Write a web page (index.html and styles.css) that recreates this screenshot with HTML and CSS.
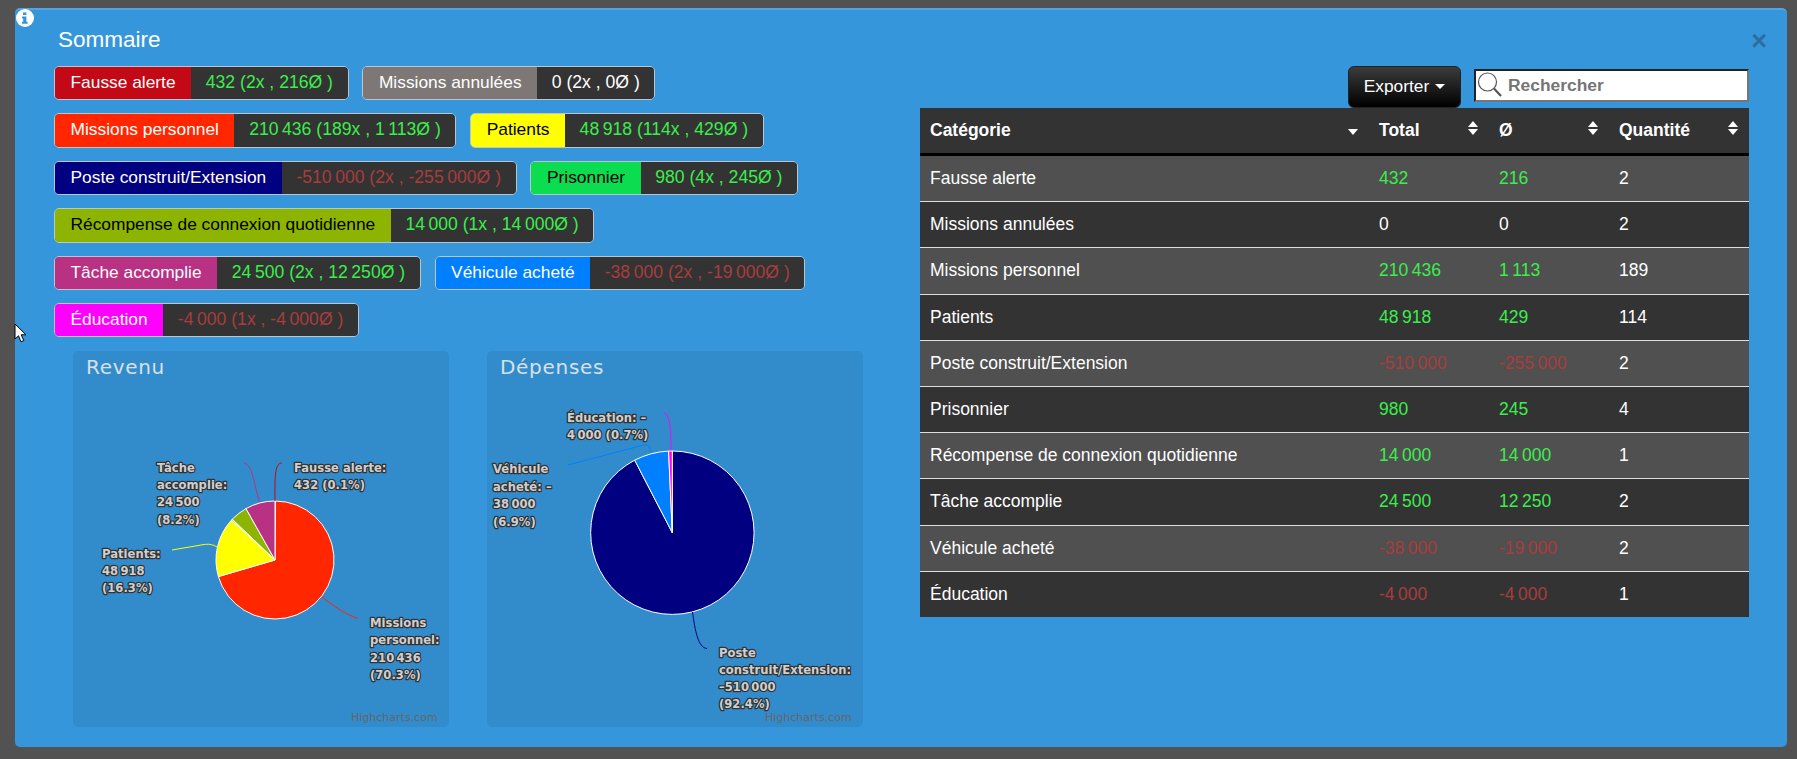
FILE: index.html
```html
<!DOCTYPE html>
<html lang="fr">
<head>
<meta charset="utf-8">
<title>Sommaire</title>
<link rel="stylesheet" href="styles.css">
</head>
<body>
<svg class="cursor" width="14" height="21" viewBox="0 0 14 21"><path d="M1 1 L1 16 L4.5 12.8 L7 18.8 L9.8 17.6 L7.2 11.8 L12 11.8 Z" fill="#fff" stroke="#000" stroke-width="1"/></svg>
<main class="modal">
  <svg class="info" width="20" height="20" viewBox="0 0 20 20"><circle cx="10" cy="10" r="9" fill="#fff"/><path d="M8 4.5h3.4v2.6H8zM7 8.4h4.4v5.3h1.2v2H7v-2h1.2v-3.3H7z" fill="#3596dc"/></svg>
  <button class="close" type="button">×</button>
  <h1 class="title">Sommaire</h1>
  <div class="columns">
    <section class="left">
      <div class="badges">
        <div class="badge"><span class="name c-fausse">Fausse alerte</span><span class="val pos">432 (2x , 216Ø )</span></div>
        <div class="badge"><span class="name c-annul">Missions annulées</span><span class="val zero">0 (2x , 0Ø )</span></div>
        <div class="badge"><span class="name c-perso">Missions personnel</span><span class="val pos">210&thinsp;436 (189x , 1&thinsp;113Ø )</span></div>
        <div class="badge"><span class="name c-pat">Patients</span><span class="val pos">48&thinsp;918 (114x , 429Ø )</span></div>
        <div class="badge"><span class="name c-poste">Poste construit/Extension</span><span class="val neg">-510&thinsp;000 (2x , -255&thinsp;000Ø )</span></div>
        <div class="badge"><span class="name c-pris">Prisonnier</span><span class="val pos">980 (4x , 245Ø )</span></div>
        <div class="badge"><span class="name c-rec">Récompense de connexion quotidienne</span><span class="val pos">14&thinsp;000 (1x , 14&thinsp;000Ø )</span></div>
        <div class="badge"><span class="name c-tache">Tâche accomplie</span><span class="val pos">24&thinsp;500 (2x , 12&thinsp;250Ø )</span></div>
        <div class="badge"><span class="name c-veh">Véhicule acheté</span><span class="val neg">-38&thinsp;000 (2x , -19&thinsp;000Ø )</span></div>
        <div class="badge"><span class="name c-edu">Éducation</span><span class="val neg">-4&thinsp;000 (1x , -4&thinsp;000Ø )</span></div>
      </div>
      <div class="charts">
        <svg class="chart" width="376" height="376" viewBox="73 351 376 376">
          <text class="chart-title" x="86" y="374">Revenu</text>
          <g class="wedges">
            <path fill="#c30816" d="M275 560L275 501A59 59 0 0 1 275.5 501Z"/>
            <path fill="#ff2600" d="M275 560L275.5 501A59 59 0 1 1 218.4 576.6Z"/>
            <path fill="#ffff00" d="M275 560L218.4 576.6A59 59 0 0 1 231.5 520.1Z"/>
            <path fill="#0cdc50" d="M275 560L231.5 520.1A59 59 0 0 1 232.3 519.2Z"/>
            <path fill="#8cb400" d="M275 560L232.3 519.2A59 59 0 0 1 246 508.6Z"/>
            <path fill="#b93182" d="M275 560L246 508.6A59 59 0 0 1 275 501Z"/>
          </g>
          <g class="leaders">
            <path stroke="#c30816" d="M275 501C275 480 274 463 282 463"/>
            <path stroke="#b93182" d="M259.500 502C254 485 253 465 244 463"/>
            <path stroke="#ffff00" d="M217 547C212 544 208 544 204 544.500L172 550"/>
            <path stroke="#ff2600" d="M322 597C335 607 345 614 358 618.500"/>
          </g>
          <g class="labels">
            <text x="294" y="472">Fausse alerte:</text>
            <text x="294" y="489">432 (0.1%)</text>
            <text x="157" y="472">Tâche</text>
            <text x="157" y="489">accomplie:</text>
            <text x="157" y="506">24&thinsp;500</text>
            <text x="157" y="523.500">(8.2%)</text>
            <text x="102" y="557.500">Patients:</text>
            <text x="102" y="575">48&thinsp;918</text>
            <text x="102" y="592">(16.3%)</text>
            <text x="370" y="627">Missions</text>
            <text x="370" y="644">personnel:</text>
            <text x="370" y="661.500">210&thinsp;436</text>
            <text x="370" y="678.500">(70.3%)</text>
          </g>
          <text class="credit" x="351" y="721">Highcharts.com</text>
        </svg>
        <svg class="chart" width="376" height="376" viewBox="487 351 376 376">
          <text class="chart-title" x="500" y="374">Dépenses</text>
          <g class="wedges">
            <path fill="#000080" d="M672.300 532.700L672.300 451A81.700 81.700 0 1 1 634.700 460.200Z"/>
            <path fill="#0080ff" d="M672.300 532.700L634.700 460.200A81.700 81.700 0 0 1 668.600 451.100Z"/>
            <path fill="#ff00ff" d="M672.300 532.700L668.600 451.100A81.700 81.700 0 0 1 672.300 451Z"/>
          </g>
          <g class="leaders">
            <path stroke="#ff00ff" d="M671 450C671 430 670 413 663.500 413"/>
            <path stroke="#0080ff" d="M651 453C650 444 647 444 640 446L568 465"/>
            <path stroke="#000080" d="M692.500 612C695 630 698 648 707 648.500"/>
          </g>
          <g class="labels">
            <text x="567" y="421.500">Éducation: –</text>
            <text x="567" y="438.500">4&thinsp;000 (0.7%)</text>
            <text x="493" y="473">Véhicule</text>
            <text x="493" y="490.500">acheté: –</text>
            <text x="493" y="507.500">38&thinsp;000</text>
            <text x="493" y="525.500">(6.9%)</text>
            <text x="719" y="656.500">Poste</text>
            <text x="719" y="673.500">construit/Extension:</text>
            <text x="719" y="691">–510&thinsp;000</text>
            <text x="719" y="708">(92.4%)</text>
          </g>
          <text class="credit" x="765" y="721">Highcharts.com</text>
        </svg>
      </div>
    </section>
    <section class="right">
      <div class="toolbar">
        <button class="export" type="button">Exporter<span class="caret"></span></button>
        <div class="search">
          <svg class="lens" width="26" height="26" viewBox="0 0 26 26"><circle cx="10.500" cy="10" r="9" fill="none" stroke="#555" stroke-width="1.200"/><path d="M17 16.500L24 24" stroke="#555" stroke-width="2.200"/></svg>
          <input class="search-input" type="text" placeholder="Rechercher">
        </div>
      </div>
      <table class="data">
        <colgroup><col class="col-cat"><col class="col-num"><col class="col-num"><col class="col-qty"></colgroup>
        <thead>
          <tr>
            <th><div class="th-in">Catégorie<span class="sort"><i class="down"></i></span></div></th>
            <th><div class="th-in">Total<span class="sort"><i class="up"></i><i class="down"></i></span></div></th>
            <th><div class="th-in">Ø<span class="sort"><i class="up"></i><i class="down"></i></span></div></th>
            <th><div class="th-in">Quantité<span class="sort"><i class="up"></i><i class="down"></i></span></div></th>
          </tr>
        </thead>
        <tbody>
          <tr><td>Fausse alerte</td><td class="pos">432</td><td class="pos">216</td><td>2</td></tr>
          <tr><td>Missions annulées</td><td>0</td><td>0</td><td>2</td></tr>
          <tr><td>Missions personnel</td><td class="pos">210&thinsp;436</td><td class="pos">1&thinsp;113</td><td>189</td></tr>
          <tr><td>Patients</td><td class="pos">48&thinsp;918</td><td class="pos">429</td><td>114</td></tr>
          <tr><td>Poste construit/Extension</td><td class="neg">-510&thinsp;000</td><td class="neg">-255&thinsp;000</td><td>2</td></tr>
          <tr><td>Prisonnier</td><td class="pos">980</td><td class="pos">245</td><td>4</td></tr>
          <tr><td>Récompense de connexion quotidienne</td><td class="pos">14&thinsp;000</td><td class="pos">14&thinsp;000</td><td>1</td></tr>
          <tr><td>Tâche accomplie</td><td class="pos">24&thinsp;500</td><td class="pos">12&thinsp;250</td><td>2</td></tr>
          <tr><td>Véhicule acheté</td><td class="neg">-38&thinsp;000</td><td class="neg">-19&thinsp;000</td><td>2</td></tr>
          <tr><td>Éducation</td><td class="neg">-4&thinsp;000</td><td class="neg">-4&thinsp;000</td><td>1</td></tr>
        </tbody>
      </table>
    </section>
  </div>
</main>
</body>
</html>
```
FILE: styles.css
```css
* { box-sizing: border-box; }
html, body { margin: 0; height: 100%; overflow: hidden; }
body {
  background: #525252;
  font-family: "Liberation Sans", Arial, sans-serif;
  font-size: 17.35px;
  color: #fff;
  padding: 8px 10px 12px 15px;
}
.cursor { position: absolute; left: 14px; top: 323px; z-index: 5; }
.modal {
  position: relative;
  height: 739px;
  background: #3596dc;
  border-top: 2px solid #4ea5e4;
  border-radius: 5px;
  padding: 0 38px 0 39px;
}
.info { position: absolute; left: 0; top: -2px; }
.close {
  position: absolute;
  right: 20px;
  top: 18px;
  padding: 0;
  border: 0;
  background: none;
  font: bold 27px/27px "Liberation Sans", Arial, sans-serif;
  color: #2b6f9f;
}
.title {
  margin: 0;
  padding: 2px 0 0 4px;
  height: 56px;
  font-size: 22.5px;
  font-weight: normal;
  line-height: 56px;
}
.columns { display: flex; justify-content: space-between; }
.left { width: 822px; }
.badges {
  display: flex;
  flex-wrap: wrap;
  column-gap: 13.8px;
  row-gap: 13px;
}
.badge {
  display: flex;
  height: 34.4px;
  line-height: 30.6px;
  border: 1px solid #bdc5cc;
  border-radius: 5px;
  overflow: hidden;
  white-space: nowrap;
}
.name { padding: 0 15.5px; }
.val { padding: 0 14.7px; background: #333; font-size: 17.6px; }
.pos { color: #3bee4c; }
.neg { color: #a83d3d; }
.zero { color: #fff; }
.c-fausse { background: #c30816; }
.c-annul { background: #7d7876; }
.c-perso { background: #ff2600; }
.c-pat { background: #ffff00; color: #000; }
.c-poste { background: #000080; }
.c-pris { background: #0cdc50; color: #000; }
.c-rec { background: #8cb400; color: #000; }
.c-tache { background: #b93182; }
.c-veh { background: #0080ff; }
.c-edu { background: #ff00ff; }
.charts {
  display: flex;
  gap: 38px;
  margin: 14px 0 0 19px;
}
.chart {
  display: block;
  background: #328ccc;
  border-radius: 5px;
}
.chart-title {
  font-family: "DejaVu Sans", sans-serif;
  font-size: 20px;
  letter-spacing: 0.7px;
  fill: #d8e0e6;
}
.wedges path { stroke: #fff; stroke-width: 1; stroke-linejoin: round; }
.leaders path { fill: none; stroke-width: 1; }
.labels text {
  font-family: "DejaVu Sans", sans-serif;
  font-size: 11.6px;
  font-weight: bold;
  fill: #cfcfcf;
  stroke: #333;
  stroke-width: 2.5px;
  stroke-linejoin: round;
  paint-order: stroke;
}
.credit {
  font-family: "DejaVu Sans", sans-serif;
  font-size: 11px;
  fill: #666;
}
.right { width: 829px; }
.toolbar {
  display: flex;
  justify-content: flex-end;
  align-items: flex-start;
  gap: 13px;
  height: 42px;
}
.export {
  height: 42px;
  width: 113px;
  padding: 0 0 2px;
  border: 1px solid #222;
  border-radius: 6px;
  background: linear-gradient(#3c3c3c, #000);
  color: #fff;
  font: inherit;
}
.caret {
  display: inline-block;
  margin-left: 6px;
  vertical-align: middle;
  border-top: 5px solid #fff;
  border-left: 5px solid transparent;
  border-right: 5px solid transparent;
}
.search { position: relative; margin-top: 3px; }
.lens { position: absolute; left: 3px; top: 3px; }
.search-input {
  display: block;
  width: 275px;
  height: 33px;
  padding: 0 4px 0 32px;
  border-style: solid;
  border-width: 2px;
  border-color: #222 #767676 #767676 #222;
  background: #fff;
  font: bold 17.4px "Liberation Sans", Arial, sans-serif;
  color: #333;
  outline: none;
}
.search-input::placeholder { color: #757575; opacity: 1; }
.data {
  width: 829px;
  table-layout: fixed;
  border-collapse: separate;
  border-spacing: 0;
  background: #333;
  font-size: 17.5px;
}
.col-cat { width: 449px; }
.col-num { width: 120px; }
.col-qty { width: 140px; }
th {
  height: 48px;
  padding: 0 10px;
  text-align: left;
  border-bottom: 3px solid #000;
  font-weight: bold;
}
.th-in { display: flex; align-items: center; justify-content: space-between; padding-right: 1px; }
.sort { display: flex; flex-direction: column; gap: 2px; width: 10px; margin-top: -5px; justify-content: flex-end; min-height: 14px; }
.sort i { display: block; width: 0; height: 0; border-left: 5px solid transparent; border-right: 5px solid transparent; }
.sort .up { border-bottom: 6px solid #fff; }
.sort .down { border-top: 6px solid #fff; }
td {
  height: 46.2px;
  padding: 0 10px;
  border-bottom: 1px solid #ddd;
}
tbody tr:last-child td { border-bottom: 0; height: 45.6px; }
tbody tr:nth-child(odd) { background: #505050; }
```
